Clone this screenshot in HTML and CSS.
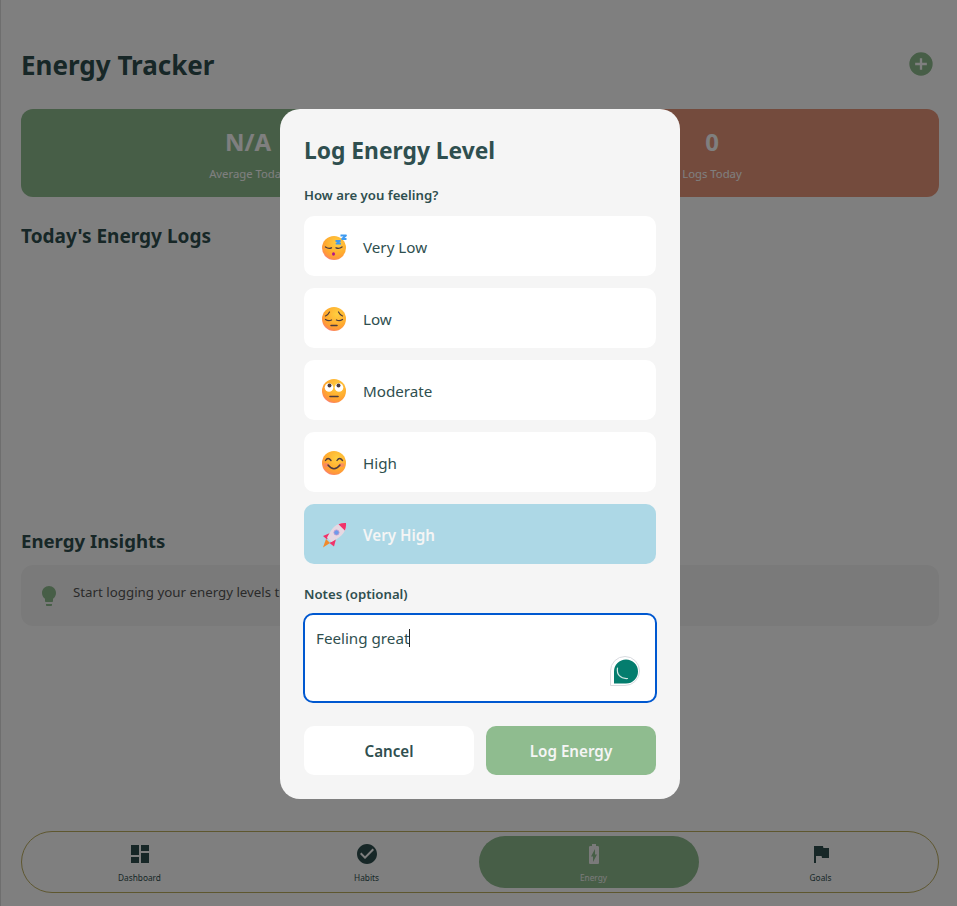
FILE: index.html
```html
<!DOCTYPE html>
<html lang="en">
<head>
<meta charset="utf-8">
<title>Energy Tracker</title>
<link rel="stylesheet" href="styles.css">
</head>
<body>
<div class="app">
  <header class="header">
    <h1 class="title">Energy Tracker</h1>
    <button class="add-btn" aria-label="Add">
      <svg viewBox="0 0 24 24" class="add-icon"><path d="M12 2a10 10 0 1 0 0 20 10 10 0 0 0 0-20zm5 11h-4v4h-2v-4H7v-2h4V7h2v4h4v2z"/></svg>
    </button>
  </header>
  <section class="stats">
    <div class="stat stat-green"><div class="stat-value">N/A</div><div class="stat-label">Average Today</div></div>
    <div class="stat stat-red"><div class="stat-value">0</div><div class="stat-label">Logs Today</div></div>
  </section>
  <h2 class="section-title logs-title">Today's Energy Logs</h2>
  <div class="logs-empty"></div>
  <h2 class="section-title insights-title">Energy Insights</h2>
  <div class="insight">
    <svg viewBox="0 0 24 24" class="bulb"><path d="M9 21c0 .55.45 1 1 1h4c.55 0 1-.45 1-1v-1H9v1zm3-19C8.14 2 5 5.14 5 9c0 2.38 1.19 4.47 3 5.74V17c0 .55.45 1 1 1h6c.55 0 1-.45 1-1v-2.26c1.81-1.27 3-3.36 3-5.74 0-3.86-3.14-7-7-7z"/></svg>
    <span class="insight-text">Start logging your energy levels to</span>
  </div>
  <nav class="nav">
    <div class="nav-pill"></div>
    <div class="nav-item">
      <svg viewBox="0 0 24 24" class="nav-icon"><path d="M3 13h8V3H3v10zm0 8h8v-6H3v6zm10 0h8V11h-8v10zm0-18v6h8V3h-8z"/></svg>
      <span>Dashboard</span>
    </div>
    <div class="nav-item">
      <svg viewBox="0 0 24 24" class="nav-icon"><path d="M12 2C6.48 2 2 6.48 2 12s4.48 10 10 10 10-4.48 10-10S17.52 2 12 2zm-2 15l-5-5 1.41-1.41L10 14.17l7.59-7.59L19 8l-9 9z"/></svg>
      <span>Habits</span>
    </div>
    <div class="nav-item nav-active">
      <svg viewBox="0 0 24 24" class="nav-icon"><path d="M15.67 4H14V2h-4v2H8.33C7.6 4 7 4.6 7 5.33v15.33C7 21.4 7.6 22 8.33 22h7.33c.74 0 1.34-.6 1.34-1.33V5.33C17 4.6 16.4 4 15.67 4zM11 20v-5.5H9L13 7v5.5h2L11 20z"/></svg>
      <span>Energy</span>
    </div>
    <div class="nav-item">
      <svg viewBox="0 0 24 24" class="nav-icon"><path d="M14.4 6L14 4H5v17h2v-7h5.6l.4 2h7V6z"/></svg>
      <span>Goals</span>
    </div>
  </nav>
</div>

<div class="overlay">
  <div class="modal">
    <h2 class="modal-title">Log Energy Level</h2>
    <div class="field-label">How are you feeling?</div>
    <div class="options">
      <div class="option">
        <svg class="emoji" viewBox="0 0 26 26"><defs><radialGradient id="face" cx="62%" cy="30%" r="80%"><stop offset="0" stop-color="#ffcf40"/><stop offset=".6" stop-color="#ffaa2e"/><stop offset=".82" stop-color="#ff9440"/><stop offset="1" stop-color="#f26fa0"/></radialGradient></defs><circle cx="13" cy="14" r="12" fill="url(#face)"/><path d="M4.500 13q3 2.200 6 .8M15 13.800q3 1.400 6-.8" fill="none" stroke="#4b3a3f" stroke-width="1.300" stroke-linecap="round"/><ellipse cx="12.500" cy="20" rx="1.500" ry="1.800" fill="#b0148c"/><path d="M14.500 7h4.500l-3.500 2.600h4.500M19.500 1.500h5.500l-4 3.500h4.500" fill="none" stroke="#3f9bf0" stroke-width="1.800" stroke-linejoin="round"/></svg>
        <span>Very Low</span>
      </div>
      <div class="option">
        <svg class="emoji" viewBox="0 0 26 26"><circle cx="13" cy="13" r="12" fill="url(#face)"/><path d="M4.500 10q2.500-1 4-4M21.500 10q-2.500-1-4-4" fill="none" stroke="#4b3a3f" stroke-width="1.200" stroke-linecap="round"/><path d="M4.500 13.500q3 2 6 .5M15.500 14q3 1.500 6-.5" fill="none" stroke="#4b3a3f" stroke-width="1.300" stroke-linecap="round"/><path d="M10 19.500h6" stroke="#4b3a3f" stroke-width="1.500" stroke-linecap="round"/></svg>
        <span>Low</span>
      </div>
      <div class="option">
        <svg class="emoji" viewBox="0 0 26 26"><circle cx="13" cy="13" r="12" fill="url(#face)"/><circle cx="8" cy="9.500" r="4.300" fill="#fff"/><circle cx="18" cy="9.500" r="4.300" fill="#fff"/><circle cx="8.500" cy="7.500" r="2" fill="#4b3a3f"/><circle cx="17.500" cy="7.500" r="2" fill="#4b3a3f"/><path d="M9 18.500h8" stroke="#4b3a3f" stroke-width="1.600" stroke-linecap="round"/></svg>
        <span>Moderate</span>
      </div>
      <div class="option">
        <svg class="emoji" viewBox="0 0 26 26"><circle cx="13" cy="13" r="12" fill="url(#face)"/><ellipse cx="5.500" cy="15" rx="3" ry="2" fill="#f77a7a" opacity=".6"/><ellipse cx="20.500" cy="15" rx="3" ry="2" fill="#f77a7a" opacity=".6"/><path d="M4.500 10.500q2.500-4 5.500 0M16 10.500q2.500-4 5.500 0" fill="none" stroke="#4b3a3f" stroke-width="1.400" stroke-linecap="round"/><path d="M7 15q6 7.500 12 0" fill="none" stroke="#4b3a3f" stroke-width="1.500" stroke-linecap="round"/></svg>
        <span>High</span>
      </div>
      <div class="option option-selected">
        <svg class="emoji" viewBox="0 0 26 26"><path d="M5 17l4 4-7 4.500z" fill="#f08a2c"/><path d="M9 11l-7 3 4 3.500M15 17l-2 7.500-4.500-3.500z" fill="#f0336a"/><path d="M25 1c-6.500-.5-12 2-15.500 8.500L6 15.500l4.500 4.500 6-3.500C22.500 13 25.500 7.500 25 1z" fill="#e6d8e2"/><path d="M25 1c-2.700-.2-5.200.2-7.500 1.200l6.300 6.300C24.800 6.200 25.200 3.700 25 1z" fill="#f0336a"/><circle cx="15.500" cy="10.500" r="2.600" fill="#6d9bea" stroke="#c79ad0" stroke-width=".8"/></svg>
        <span>Very High</span>
      </div>
    </div>
    <div class="field-label notes-label">Notes (optional)</div>
    <div class="notes">
      <span>Feeling great</span><span class="caret"></span>
      <div class="widget">
        <svg viewBox="0 0 30 30"><path d="M15 .5A14.500 14.500 0 0 1 15 29.500H.5V15A14.500 14.500 0 0 1 15 .5z" fill="#fff" stroke="#d9dbe0"/><path d="M16 3.500A12 12 0 0 1 16 27.500H4V15.500A12 12 0 0 1 16 3.500z" fill="#047d6e"/><path d="M7.500 12c-1 6 2.500 11 10 10.500" fill="none" stroke="#cfe6e2" stroke-width="1.200" stroke-linecap="round"/></svg>
      </div>
    </div>
    <div class="actions">
      <button class="btn btn-cancel">Cancel</button>
      <button class="btn btn-log">Log Energy</button>
    </div>
  </div>
</div>
</body>
</html>
```
FILE: styles.css
```css
* { box-sizing: border-box; }
html, body { margin: 0; height: 100%; }
body {
  background: #fff;
  font-family: "Noto Sans", "Open Sans", sans-serif;
  color: #2f4f4f;
  overflow: hidden;
}
.app {
  height: 906px;
  padding: 0 18px 13px 20px;
  display: flex;
  flex-direction: column;
  border-left: 1px solid #ddd;
}
.header {
  display: flex;
  align-items: center;
  justify-content: space-between;
  padding-top: 20px;
  height: 109px;
}
.title { margin: 0; font-size: 26px; font-weight: 700; line-height: 40px; }
.add-btn {
  width: 28px; height: 28px; margin: -2px 4px 0 0; padding: 0;
  border: 0; background: none; display: block;
}
.add-icon { width: 28px; height: 28px; display: block; fill: #8fbc8f; }
.stats { display: flex; gap: 10px; }
.stat {
  flex: 1; height: 88px; border-radius: 12px; color: #fff;
  text-align: center; padding-top: 15px;
}
.stat-green { background: #8fbc8f; }
.stat-red { background: #e9967a; }
.stat-value { font-size: 24px; font-weight: 700; line-height: 36px; }
.stat-label { font-size: 11.3px; line-height: 18px; margin-top: 5px; }
.section-title { margin: 0; font-size: 19px; font-weight: 700; line-height: 28px; }
.logs-title { margin-top: 25px; }
.logs-empty { height: 277px; }
.insights-title { font-size: 18.6px; }
.insight {
  margin-top: 10px; height: 61px; background: #f5f5f5; border-radius: 12px;
  display: flex; align-items: flex-start; gap: 12px; padding: 17px 16px 0;
  font-size: 13.3px; color: #555;
}
.bulb { width: 24px; height: 24px; fill: #8fbc8f; flex: none; margin-top: 2px; }
.insight-text { line-height: 20px; }
.nav {
  position: relative;
  margin-top: auto;
  height: 62px;
  border: 1px solid #bdae5f;
  border-radius: 31px;
  display: grid;
  grid-template-columns: repeat(4, 1fr);
  padding: 0 4px;
}
.nav-pill {
  position: absolute; left: 457px; top: 4px; width: 220px; height: 52px;
  border-radius: 26px; background: #8fbc8f;
}
.nav-item {
  position: relative; display: flex; flex-direction: column; align-items: center;
  padding-top: 10px; font-size: 8.3px; line-height: 13px; color: #2f4f4f;
}
.nav-icon { width: 24px; height: 24px; fill: #2f4f4f; margin-bottom: 5px; }
.nav-active { color: #f5f5f5; }
.nav-active .nav-icon { fill: #f5f5f5; }
.overlay {
  position: fixed; inset: 0; background: rgba(0,0,0,.5);
  display: flex; justify-content: center; align-items: flex-start; padding: 109px 0 0 3px;
}
.modal {
  width: 400px; height: 690px; background: #f5f5f5; border-radius: 20px; padding: 24px;
}
.modal-title { margin: 0; font-size: 22.8px; font-weight: 700; line-height: 36px; }
.field-label { font-size: 13.2px; font-weight: 600; line-height: 20px; }
.modal-title + .field-label { margin-top: 16px; }
.options { margin-top: 11px; display: flex; flex-direction: column; gap: 12px; }
.option {
  height: 60px; background: #fff; border-radius: 10px; display: flex; align-items: center;
  padding: 2px 17px 0; gap: 16px; font-size: 15.2px; line-height: 22px;
}
.option-selected { background: #add8e6; color: #f5f5f5; font-weight: 600; }
.emoji { width: 26px; height: 26px; flex: none; }
.notes-label { margin-top: 20px; }
.notes {
  position: relative; margin: 9px -1px 0; height: 90px; background: #fff;
  border: 2px solid #0058d0; border-radius: 10px; padding: 11px 11px; font-size: 15.2px; line-height: 24px;
}
.caret { display: inline-block; width: 1px; height: 18px; background: #222; vertical-align: -3px; }
.widget { position: absolute; right: 15px; bottom: 15px; width: 30px; height: 30px; }
.widget svg { display: block; width: 30px; height: 30px; }
.actions { margin-top: 23px; display: flex; gap: 12px; }
.btn {
  flex: 1; height: 49px; border: 0; border-radius: 10px; font: 600 15.2px "Noto Sans", "Open Sans", sans-serif;
}
.btn-cancel { background: #fff; color: #2f4f4f; }
.btn-log { background: #8fbc8f; color: #f5f5f5; }
```
